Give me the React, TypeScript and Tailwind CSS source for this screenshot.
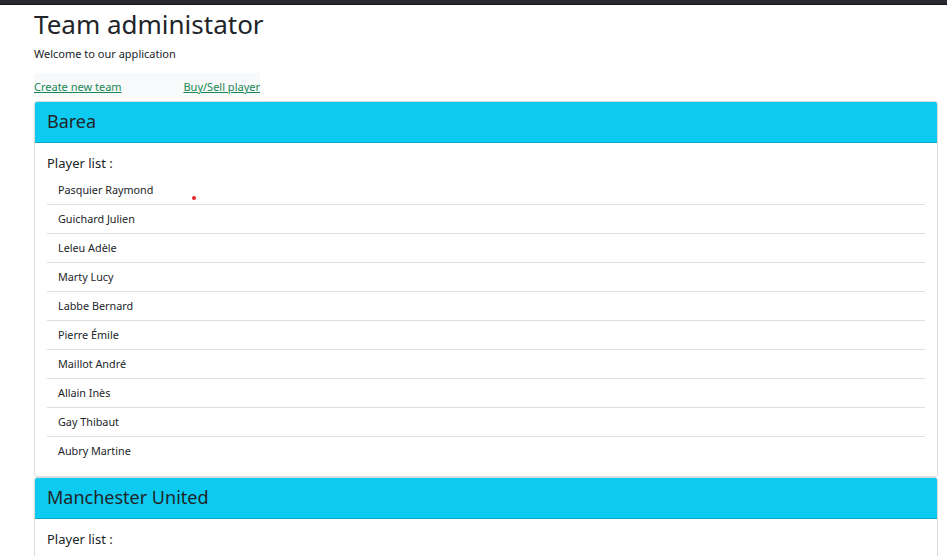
import React from 'react'

interface Team {
  name: string
  players: string[]
}

const teams: Team[] = [
  {
    name: 'Barea',
    players: [
      'Pasquier Raymond',
      'Guichard Julien',
      'Leleu Adèle',
      'Marty Lucy',
      'Labbe Bernard',
      'Pierre Émile',
      'Maillot André',
      'Allain Inès',
      'Gay Thibaut',
      'Aubry Martine',
    ],
  },
  {
    name: 'Manchester United',
    players: ['Durand Paul', 'Lefevre Claire', 'Moreau Hugo'],
  },
]

function TeamCard({ team, first }: { team: Team; first?: boolean }) {
  return (
    <div className="relative border border-[#dcdcdc] rounded-[3px] bg-white">
      <div className="h-[41px] bg-[#0dcaf0] border-b border-[#0aa8cc] flex items-center px-3 pb-[3px] rounded-t-[2px]">
        <h2 className="text-[18px] text-[#212529] leading-none">{team.name}</h2>
      </div>
      <div className="px-3 pt-[10px] pb-[10px]">
        <p className="text-[13px] text-[#212529] h-[20px] leading-[20px]">Player list :</p>
        <ul className="mt-[3px]">
          {team.players.map((p, i) => (
            <li
              key={p}
              className={
                'h-[29px] flex items-center pl-[11px] text-[10.8px] text-[#212529] ' +
                (i < team.players.length - 1 ? 'border-b border-[#dedede]' : '')
              }
            >
              {p}
            </li>
          ))}
        </ul>
      </div>
      {first && <span className="absolute left-[157px] top-[94px] w-[4px] h-[4px] rounded-full bg-[#e8262b]" />}
    </div>
  )
}

export default function App() {
  return (
    <div className="min-h-screen bg-white font-['Noto_Sans','Open_Sans',sans-serif]">
      <div className="h-[5px] bg-[#2a2830] border-b border-[#141218]" />
      <div className="pl-[34px] pr-[9px]">
        <h1 className="text-[26px] leading-[36px] text-[#212529] mt-[1px]">Team administator</h1>
        <p className="text-[11px] text-[#212529] mt-[4px] leading-[16px]">Welcome to our application</p>
        <nav className="mt-[11px] w-[226px] h-[24px] bg-[#f8f9fa] flex items-end justify-between pb-[3px]">
          <a href="#" className="text-[11px] text-[#198754] underline leading-[14px]">Create new team</a>
          <a href="#" className="text-[11px] text-[#198754] underline leading-[14px]">Buy/Sell player</a>
        </nav>
        <div className="mt-[4px] flex flex-col">
          {teams.map((t, i) => (
            <TeamCard key={t.name} team={t} first={i === 0} />
          ))}
        </div>
      </div>
    </div>
  )
}
